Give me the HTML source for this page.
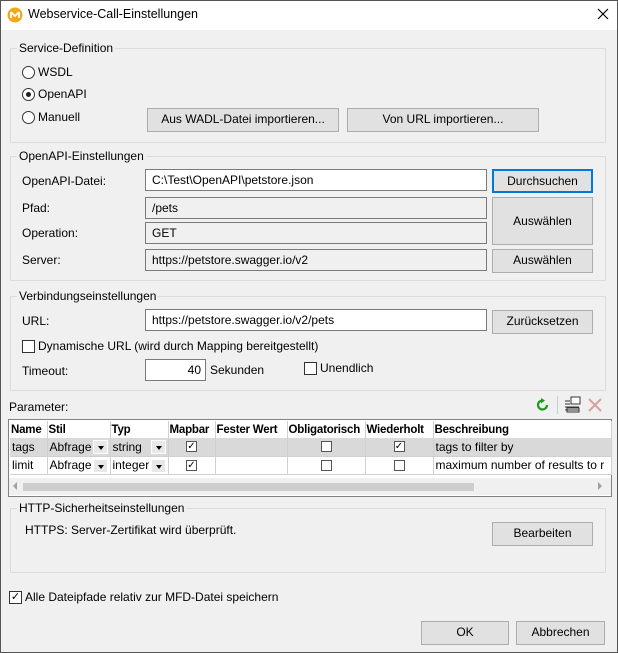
<!DOCTYPE html>
<html><head><meta charset="utf-8"><style>
*{box-sizing:border-box;margin:0;padding:0}
body{width:618px;height:653px;background:#f0f0f0;font-family:"Liberation Sans",sans-serif;font-size:12px;color:#000;position:relative;overflow:hidden}
.a{position:absolute;white-space:nowrap}
.win{position:absolute;left:0;top:0;width:618px;height:653px;border:1px solid #555;pointer-events:none}
.title{position:absolute;left:0;top:0;width:618px;height:30px;background:#fff}
.grp{position:absolute;border:1px solid #dcdcdc}
.gl{position:absolute;background:#f0f0f0;padding:0 2px;line-height:14px}
.in{position:absolute;background:#fff;border:1px solid #7a7a7a;padding-left:6px;line-height:20px}
.ro{background:#f0f0f0}
.btn{position:absolute;background:#e1e1e1;border:1px solid #adadad;text-align:center;line-height:21px}
.rad{position:absolute;width:13px;height:13px;border:1px solid #333;border-radius:50%;background:#fff}
.cb{position:absolute;width:13px;height:13px;border:1px solid #333;background:#fff}
table{border-collapse:collapse;position:absolute;left:10px;top:421px;table-layout:fixed;width:601px}
td{border-right:1px solid #d0d0d0;border-bottom:1px solid #d0d0d0;height:18px;padding:0 2px;overflow:hidden;white-space:nowrap;font-size:12px;position:relative}
th{text-align:left;font-weight:bold;height:17px;padding:0 1px;border-right:1px solid #d0d0d0;white-space:nowrap;overflow:hidden;font-size:11.5px;letter-spacing:-0.2px}
.dd{position:absolute;right:2px;top:2px;width:15px;height:14px;background:#e8e8e8;border:1px solid #fff}
.dd:after{content:"";position:absolute;left:4px;top:5px;border-left:3px solid transparent;border-right:3px solid transparent;border-top:4px solid #000}
.c{display:block;margin:0 auto;width:11px;height:11px;border:1px solid #555;background:#fff;font-size:10px;line-height:9px;text-align:center}
</style></head><body>
<div class="title"></div>
<svg class="a" style="left:7px;top:7px" width="16" height="16"><circle cx="8" cy="8" r="7.5" fill="#f1a81b"/><path d="M4 5 L8 9 L12 5 M4 5 L4 11 M12 5 L12 11" stroke="#fff" stroke-width="1.8" fill="none"/></svg>
<div class="a" style="left:28px;top:7px;font-size:12.5px">Webservice-Call-Einstellungen</div>
<svg class="a" style="left:597px;top:8px" width="12" height="12"><path d="M1 1L11 11M11 1L1 11" stroke="#000" stroke-width="1.2"/></svg>

<div class="grp" style="left:10px;top:48px;width:596px;height:95px"></div>
<div class="gl a" style="left:17px;top:41px">Service-Definition</div>
<div class="rad" style="left:22px;top:66px"></div><div class="a" style="left:38px;top:65px">WSDL</div>
<div class="rad" style="left:22px;top:88px"></div><div class="a" style="left:26px;top:92px;width:5px;height:5px;border-radius:50%;background:#222"></div><div class="a" style="left:38px;top:87px">OpenAPI</div>
<div class="rad" style="left:22px;top:111px"></div><div class="a" style="left:38px;top:110px">Manuell</div>
<div class="btn" style="left:147px;top:108px;width:192px;height:24px">Aus WADL-Datei importieren...</div>
<div class="btn" style="left:347px;top:108px;width:192px;height:24px">Von URL importieren...</div>

<div class="grp" style="left:10px;top:156px;width:596px;height:125px"></div>
<div class="gl a" style="left:17px;top:149px">OpenAPI-Einstellungen</div>
<div class="a" style="left:22px;top:174px">OpenAPI-Datei:</div>
<div class="a" style="left:22px;top:201px">Pfad:</div>
<div class="a" style="left:22px;top:226px">Operation:</div>
<div class="a" style="left:22px;top:253px">Server:</div>
<div class="in" style="left:145px;top:169px;width:342px;height:22px">C:\Test\OpenAPI\petstore.json</div>
<div class="in ro" style="left:145px;top:197px;width:342px;height:22px">/pets</div>
<div class="in ro" style="left:145px;top:222px;width:342px;height:22px">GET</div>
<div class="in ro" style="left:145px;top:249px;width:342px;height:22px">https://petstore.swagger.io/v2</div>
<div class="btn" style="left:492px;top:169px;width:101px;height:24px;border:2px solid #0078d7;line-height:20px">Durchsuchen</div>
<div class="btn" style="left:492px;top:197px;width:101px;height:48px;line-height:46px">Auswählen</div>
<div class="btn" style="left:492px;top:249px;width:101px;height:24px">Auswählen</div>

<div class="grp" style="left:10px;top:296px;width:596px;height:95px"></div>
<div class="gl a" style="left:17px;top:289px">Verbindungseinstellungen</div>
<div class="a" style="left:22px;top:314px">URL:</div>
<div class="in" style="left:145px;top:309px;width:342px;height:22px">https://petstore.swagger.io/v2/pets</div>
<div class="btn" style="left:492px;top:310px;width:101px;height:24px">Zurücksetzen</div>
<div class="cb" style="left:22px;top:340px"></div><div class="a" style="left:38px;top:339px">Dynamische URL (wird durch Mapping bereitgestellt)</div>
<div class="a" style="left:22px;top:364px">Timeout:</div>
<div class="in" style="left:145px;top:359px;width:61px;height:22px;text-align:right;padding-right:4px">40</div>
<div class="a" style="left:210px;top:363px">Sekunden</div>
<div class="cb" style="left:304px;top:362px"></div><div class="a" style="left:320px;top:361px">Unendlich</div>

<div class="a" style="left:9px;top:400px">Parameter:</div>
<svg class="a" style="left:536px;top:398px" width="14" height="14"><path d="M11 7 A4.5 4.5 0 1 1 7 2.5" stroke="#1a9a1a" stroke-width="2.2" fill="none"/><path d="M5 0 L9 2.5 L5 5.5Z" fill="#1a9a1a"/></svg>
<div class="a" style="left:557px;top:396px;width:1px;height:18px;background:#ccc"></div>
<svg class="a" style="left:564px;top:396px" width="18" height="18"><rect x="7" y="1" width="9" height="7" fill="#fff" stroke="#333"/><path d="M1 5h5M1 8h5M1 11h14M1 14h14" stroke="#333"/><rect x="3" y="12" width="12" height="4" fill="none" stroke="#333"/></svg>
<svg class="a" style="left:588px;top:398px" width="14" height="14"><path d="M1 1L13 13M13 1L1 13" stroke="#d9a0a0" stroke-width="2"/></svg>

<div class="a" style="left:8px;top:419px;width:604px;height:78px;background:#fff;border:1px solid #828282"></div>
<table>
<colgroup><col style="width:37px"><col style="width:63px"><col style="width:58px"><col style="width:47px"><col style="width:72px"><col style="width:78px"><col style="width:68px"><col style="width:178px"></colgroup>
<tr><th>Name</th><th>Stil</th><th>Typ</th><th>Mapbar</th><th>Fester Wert</th><th>Obligatorisch</th><th>Wiederholt</th><th>Beschreibung</th></tr>
<tr style="background:#d9d9d9"><td>tags</td><td>Abfrage<span class="dd"></span></td><td>string<span class="dd"></span></td><td><span class="c">✓</span></td><td></td><td><span class="c"></span></td><td><span class="c">✓</span></td><td>tags to filter by</td></tr>
<tr><td>limit</td><td>Abfrage<span class="dd"></span></td><td>integer<span class="dd"></span></td><td><span class="c">✓</span></td><td></td><td><span class="c"></span></td><td><span class="c"></span></td><td>maximum number of results to r</td></tr>
</table>
<div class="a" style="left:9px;top:478px;width:602px;height:17px;background:#f0f0f0"></div>
<div class="a" style="left:23px;top:483px;width:451px;height:8px;background:#cdcdcd"></div>
<div class="a" style="left:13px;top:482px;border-top:4px solid transparent;border-bottom:4px solid transparent;border-right:4px solid #a0a0a0"></div>
<div class="a" style="left:598px;top:482px;border-top:4px solid transparent;border-bottom:4px solid transparent;border-left:4px solid #a0a0a0"></div>

<div class="grp" style="left:10px;top:508px;width:596px;height:65px"></div>
<div class="gl a" style="left:17px;top:501px">HTTP-Sicherheitseinstellungen</div>
<div class="a" style="left:25px;top:523px">HTTPS: Server-Zertifikat wird überprüft.</div>
<div class="btn" style="left:492px;top:522px;width:101px;height:24px">Bearbeiten</div>

<div class="cb" style="left:9px;top:591px;font-size:11px;line-height:11px;text-align:center">✓</div>
<div class="a" style="left:25px;top:590px">Alle Dateipfade relativ zur MFD-Datei speichern</div>
<div class="btn" style="left:421px;top:621px;width:88px;height:24px">OK</div>
<div class="btn" style="left:516px;top:621px;width:89px;height:24px">Abbrechen</div>
<div class="win"></div>
</body></html>
